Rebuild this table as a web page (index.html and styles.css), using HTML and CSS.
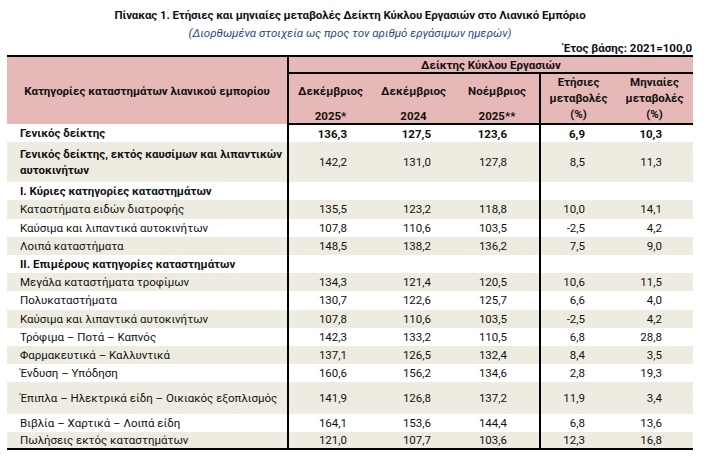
FILE: index.html
```html
<!DOCTYPE html>
<html lang="el">
<head>
<meta charset="utf-8">
<title>Πίνακας 1</title>
<link rel="stylesheet" href="styles.css">
</head>
<body>
<div class="page">
  <div class="title">Πίνακας 1. Ετήσιες και μηνιαίες μεταβολές Δείκτη Κύκλου Εργασιών στο Λιανικό Εμπόριο</div>
  <div class="subtitle">(Διορθωμένα στοιχεία ως προς τον αριθμό εργάσιμων ημερών)</div>
  <div class="base">Έτος βάσης: 2021=100,0</div>
  <table class="data">
    <colgroup>
      <col class="c0"><col class="c1"><col class="c2"><col class="c3"><col class="c4"><col class="c5">
    </colgroup>
    <thead>
      <tr class="h1">
        <th rowspan="3" class="cat">Κατηγορίες καταστημάτων λιανικού εμπορίου</th>
        <th colspan="5" class="group">Δείκτης Κύκλου Εργασιών</th>
      </tr>
      <tr class="h2">
        <th>Δεκέμβριος</th>
        <th>Δεκέμβριος</th>
        <th class="sep">Νοέμβριος</th>
        <th rowspan="2" class="chg">Ετήσιες<br>μεταβολές<br>(%)</th>
        <th rowspan="2" class="chg">Μηνιαίες<br>μεταβολές<br>(%)</th>
      </tr>
      <tr class="h3">
        <th>2025*</th>
        <th>2024</th>
        <th class="sep">2025**</th>
      </tr>
    </thead>
    <tbody>
      <tr class="bold"><td>Γενικός δείκτης</td><td>136,3</td><td>127,5</td><td>123,6</td><td>6,9</td><td>10,3</td></tr>
      <tr class="bold alt tall"><td>Γενικός δείκτης, εκτός καυσίμων και λιπαντικών αυτοκινήτων</td><td class="nb">142,2</td><td class="nb">131,0</td><td class="nb">127,8</td><td class="nb">8,5</td><td class="nb">11,3</td></tr>
      <tr class="bold"><td>Ι. Κύριες κατηγορίες καταστημάτων</td><td></td><td></td><td></td><td></td><td></td></tr>
      <tr class="alt"><td>Καταστήματα ειδών διατροφής</td><td>135,5</td><td>123,2</td><td>118,8</td><td>10,0</td><td>14,1</td></tr>
      <tr><td>Καύσιμα και λιπαντικά αυτοκινήτων</td><td>107,8</td><td>110,6</td><td>103,5</td><td>-2,5</td><td>4,2</td></tr>
      <tr class="alt"><td>Λοιπά καταστήματα</td><td>148,5</td><td>138,2</td><td>136,2</td><td>7,5</td><td>9,0</td></tr>
      <tr class="bold"><td>ΙΙ. Επιμέρους κατηγορίες καταστημάτων</td><td></td><td></td><td></td><td></td><td></td></tr>
      <tr class="alt"><td>Μεγάλα καταστήματα τροφίμων</td><td>134,3</td><td>121,4</td><td>120,5</td><td>10,6</td><td>11,5</td></tr>
      <tr><td>Πολυκαταστήματα</td><td>130,7</td><td>122,6</td><td>125,7</td><td>6,6</td><td>4,0</td></tr>
      <tr class="alt"><td>Καύσιμα και λιπαντικά αυτοκινήτων</td><td>107,8</td><td>110,6</td><td>103,5</td><td>-2,5</td><td>4,2</td></tr>
      <tr><td>Τρόφιμα – Ποτά – Καπνός</td><td>142,3</td><td>133,2</td><td>110,5</td><td>6,8</td><td>28,8</td></tr>
      <tr class="alt"><td>Φαρμακευτικά – Καλλυντικά</td><td>137,1</td><td>126,5</td><td>132,4</td><td>8,4</td><td>3,5</td></tr>
      <tr><td>Ένδυση – Υπόδηση</td><td>160,6</td><td>156,2</td><td>134,6</td><td>2,8</td><td>19,3</td></tr>
      <tr class="alt mid"><td>Έπιπλα – Ηλεκτρικά είδη – Οικιακός εξοπλισμός</td><td>141,9</td><td>126,8</td><td>137,2</td><td>11,9</td><td>3,4</td></tr>
      <tr><td>Βιβλία – Χαρτικά – Λοιπά είδη</td><td>164,1</td><td>153,6</td><td>144,4</td><td>6,8</td><td>13,6</td></tr>
      <tr class="alt last"><td>Πωλήσεις εκτός καταστημάτων</td><td>121,0</td><td>107,7</td><td>103,6</td><td>12,3</td><td>16,8</td></tr>
    </tbody>
  </table>
</div>
</body>
</html>
```

FILE: styles.css
```css
* { box-sizing: border-box; }
html, body { margin: 0; padding: 0; background: #ffffff; }
body {
  font-family: Roboto, "Liberation Sans", Arial, sans-serif;
  font-size: 11.5px;
  color: #111111;
}
.page {
  width: 686px;
  margin-left: 7px;
  padding-top: 7px;
}
.title {
  text-align: center;
  font-weight: bold;
  line-height: 16px;
  height: 16px;
  letter-spacing: -0.1px;
}
.subtitle {
  text-align: center;
  font-style: italic;
  color: #1f497d;
  line-height: 16px;
  height: 19px;
  padding-top: 2px;
}
.base {
  text-align: right;
  font-weight: bold;
  line-height: 13px;
  height: 13px;
  padding-right: 1px;
}
.data {
  width: 686px;
  border-collapse: collapse;
  table-layout: fixed;
  border-top: 2px solid #000;
  border-bottom: 2px solid #000;
}
.c0 { width: 281px; }
.c1 { width: 84px; }
.c2 { width: 83px; }
.c3 { width: 85px; }
.c4 { width: 76px; }
.c5 { width: 77px; }
th, td { padding: 0; }
thead th {
  background: #e6b8b7;
  font-weight: bold;
  text-align: center;
  vertical-align: middle;
}
.data .cat { border-right: 2px solid #000; }
.h1 .group { height: 17px; line-height: 14px; vertical-align: top; padding-top: 1px; border-bottom: 2px solid #000; }
.h2 th { height: 33px; }
.h3 th { height: 15px; line-height: 14px; vertical-align: middle; border-bottom: 2px solid #000; }
.h2 .sep, .h3 .sep { border-right: 2px solid #000; }
.h2 .chg { line-height: 16px; vertical-align: bottom; padding-bottom: 1px; border-bottom: 2px solid #000; }
tbody td {
  height: 18.2px;
  line-height: 14px;
  text-align: right;
  vertical-align: middle;
  white-space: nowrap;
}
tbody td:first-child {
  text-align: left;
  padding-left: 13px;
  border-right: 2px solid #000;
  white-space: normal;
}
tbody td:nth-child(2) { padding-right: 25px; }
tbody td:nth-child(3) { padding-right: 24px; }
tbody td:nth-child(4) { padding-right: 32px; border-right: 2px solid #000; }
tbody td:nth-child(5) { padding-right: 31px; }
tbody td:nth-child(6) { padding-right: 31px; }
.data tr.alt td { background: #eeece1; }
.data tr.bold td { font-weight: bold; }
.data tr.bold td.nb { font-weight: normal; }
.data tr.tall td { height: 40px; line-height: 16.5px; }
.data tr.tall td:first-child { padding-right: 4px; }
.data tr.mid td { height: 32px; }
.data tr.last td { height: 17px; }
```
